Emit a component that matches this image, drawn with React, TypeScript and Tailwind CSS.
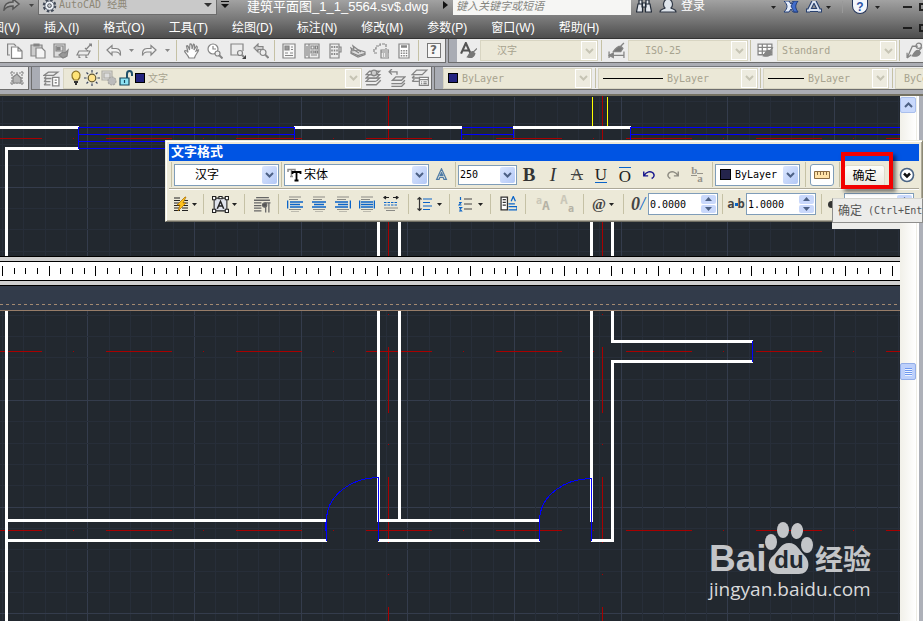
import React from "react"

type BoxProps = { children?: React.ReactNode; className?: string }

const CJK = "font-['Liberation_Sans','Noto_Sans_CJK_SC',sans-serif]"
const MONO = "font-['DejaVu_Sans_Mono','Noto_Sans_CJK_SC',monospace]"

function Icon({ children, className = "size-4" }: BoxProps) {
  return (
    <svg viewBox="0 0 16 16" fill="none" stroke="currentColor" strokeWidth="1.2" className={`shrink-0 ${className}`} aria-hidden="true">
      {children}
    </svg>
  )
}

function Sep({ className = "w-[5px]" }: { className?: string }) {
  return (
    <span className={`flex shrink-0 justify-center self-stretch py-px ${className}`}>
      <span className="w-px bg-[#c5c1a5]" />
    </span>
  )
}

/* short divider between the paragraph tools */
function RowSep({ className = "w-[11px]" }: { className?: string }) {
  return (
    <span className={`flex h-5 shrink-0 justify-center ${className}`}>
      <span className="w-px bg-[#c5c1a5]" />
    </span>
  )
}

function Tool({ label, children, className = "w-[23px]" }: BoxProps & { label: string }) {
  return (
    <button type="button" aria-label={label} className={`flex shrink-0 items-center justify-center ${className}`}>
      {children}
    </button>
  )
}

function Caret({ className = "text-[#222]" }: { className?: string }) {
  return (
    <svg viewBox="0 0 5 3" className={`h-[3px] w-[5px] shrink-0 ${className}`} aria-hidden="true">
      <path d="M0 0h5L2.5 3z" fill="currentColor" />
    </svg>
  )
}

function Chevron({ className = "" }: { className?: string }) {
  return (
    <svg viewBox="0 0 9 6" className={`h-[6px] w-[9px] ${className}`} fill="none" stroke="currentColor" strokeWidth="2" aria-hidden="true">
      <path d="M1 1l3.500 3.500L8 1" />
    </svg>
  )
}

/* greyed-out drop-down of the docked toolbars */
function DockSelect({ label, value, children, className = "" }: BoxProps & { label: string; value: string }) {
  return (
    <div className={`flex h-[21px] shrink-0 items-center border border-[#d8d5c2] bg-[#ebe8d7] pl-1 text-[#a7a38f] ${className}`}>
      {children}
      <select disabled aria-label={label} className={`h-full min-w-0 flex-1 appearance-none bg-transparent text-[10px] opacity-100 ${MONO}`}>
        <option>{value}</option>
      </select>
      <span className="flex h-full w-4 items-center justify-center border border-white bg-[#edebdf] text-[#c6c4b4]">
        <Chevron />
      </span>
    </div>
  )
}

function PanelSelect({ label, value, children, className = "" }: BoxProps & { label: string; value: string }) {
  return (
    <div className={`flex shrink-0 items-center border border-[#7f9db9] bg-white p-px text-black ${className}`}>
      {children}
      <select aria-label={label} className="h-full min-w-0 flex-1 appearance-none bg-transparent">
        <option>{value}</option>
      </select>
      <span className="flex h-full w-[15px] items-center justify-center rounded-[2px] bg-gradient-to-br from-[#dbe6fe] to-[#b3c8f6] text-[#4d6185]">
        <Chevron />
      </span>
    </div>
  )
}

function Spinner({ label, value }: { label: string; value: string }) {
  return (
    <div className="flex h-[22px] w-[70px] shrink-0 border border-[#7f9db9] bg-white p-px">
      <input aria-label={label} defaultValue={value} className="h-[18px] w-0 min-w-0 flex-1 bg-white text-black outline-none" />
      <span className="flex w-[15px] flex-col gap-px text-[#4d6185]">
        <button type="button" aria-label={`${label} +`} className="flex flex-1 items-center justify-center rounded-[2px] bg-[#c9d8fb]">
          <svg viewBox="0 0 7 4" className="h-1 w-[7px]"><path d="M0 4h7L3.500 0z" fill="currentColor" /></svg>
        </button>
        <button type="button" aria-label={`${label} -`} className="flex flex-1 items-center justify-center rounded-[2px] bg-[#c9d8fb]">
          <svg viewBox="0 0 7 4" className="h-1 w-[7px]"><path d="M0 0h7L3.500 4z" fill="currentColor" /></svg>
        </button>
      </span>
    </div>
  )
}

function Grip() {
  return <span className="w-2 shrink-0 self-stretch bg-[#a9acb4]" />
}

const undoPath = "M1 7l5-4.500v3h4c3.500 0 5 2.500 4.500 7-1-2.500-2.500-3.500-4.500-3.500H6v3z"

function Undo({ flip = false, className = "size-4" }: { flip?: boolean; className?: string }) {
  return (
    <Icon className={className}>
      <path d={undoPath} transform={flip ? "matrix(-1 0 0 1 16 0)" : undefined} fill="#f2f2f2" />
    </Icon>
  )
}

function Layers() {
  return (
    <>
      <path d="M1 11l3-3h9l-3 3z" fill="#eee" />
      <path d="M1 8l3-3h9l-3 3z" fill="#eee" />
      <path d="M1 5l3-3h9l-3 3zM1 14h9l4-4" fill="#eee" />
    </>
  )
}

function TitleBar() {
  return (
    <div className="flex h-[16px] shrink-0 items-start overflow-hidden text-[#333]">
      <Tool label="重做" className="w-[24px] text-[#aaa]">
        <svg viewBox="0 0 18 11" className="h-[11px] w-[18px]" fill="none" stroke="#565656" strokeWidth="1.500"><path d="M1 10c0-6 3-8 9-8V-1l6 5-6 5V6C5 6 3 7 1 10z" fill="#aaa" /></svg>
      </Tool>
      <Tool label="更多" className="h-[10px] w-[14px]"><Caret className="text-[#444]" /></Tool>
      <div className="flex h-[15px] w-[179px] shrink-0 items-start border border-t-0 border-[#6c6c6c] bg-[#c9c9c9] pl-[3px]">
        <svg viewBox="0 0 16 16" className="size-[15px]" fill="#eef2f7" stroke="#434b58" aria-hidden="true">
          <circle cx="8" cy="6" r="6" strokeWidth="2.500" strokeDasharray="2.700 2" />
          <circle cx="8" cy="6" r="5" />
          <circle cx="8" cy="6" r="2" fill="#c9c9c9" />
        </svg>
        <select aria-label="工作空间" className={`h-[10px] min-w-0 flex-1 appearance-none bg-transparent pl-[2px] text-[10px] leading-[10px] text-[#8d8776] ${MONO}`}>
          <option>AutoCAD 经典</option>
        </select>
        <span className="flex h-[10px] w-3 items-center"><svg viewBox="0 0 8 4" className="h-1 w-2"><path d="M0 0h8L4 4z" fill="#333" /></svg></span>
      </div>
      <Tool label="自定义" className="w-[15px]">
        <svg viewBox="0 0 8 7" className="mt-[1px] h-[7px] w-2"><path d="M0 0h8v1H0zM0 3h8L4 7z" fill="#111" /></svg>
      </Tool>
      <span className="ml-[15px] w-[196px] shrink-0 text-[13px] leading-[14px] whitespace-nowrap text-white">建筑平面图_1_1_5564.sv$.dwg</span>
      <svg viewBox="0 0 5 8" className="mt-[1px] mr-[5px] h-2 w-[5px] shrink-0"><path d="M0 0l5 4-5 4z" fill="#111" /></svg>
      <input aria-label="搜索" placeholder="键入关键字或短语" className="h-[15px] w-[178px] shrink-0 bg-[#f6f6f4] pb-1 pl-[3px] text-[11px] leading-[11px] italic placeholder:text-[#85857f]" />
      <Tool label="查找" className="w-[26px]">
        <svg viewBox="0 0 16 13" className="h-[13px] w-4" fill="#e4e8ee" stroke="#222b38" strokeWidth="1.200"><path d="M3 0h3v4H3zM10 0h3v4h-3zM6 3h4v4H6zM2 4h4.500v8h-6zM9.500 4H14l1.500 8h-6z" /></svg>
      </Tool>
      <a href="#login" className="flex shrink-0 gap-1 text-[12px] leading-[12px] whitespace-nowrap text-white">
        <svg viewBox="0 0 18 13" className="ml-[2px] h-[13px] w-[18px]" fill="#dfe5ec" stroke="#333b48" strokeWidth="1.200"><path d="M1 12c0-3 4-3 5-4C3 5 5-1 9-1s6 6 3 9c1 1 5 1 5 4z" /></svg>
        登录
      </a>
      <div className="ml-auto flex shrink-0 items-center gap-[7px] pr-0">
        <Caret />
        <svg viewBox="0 0 16 12" className="h-3 w-4" stroke="#233e78" fill="#e5edfa"><path d="M1 0c4 4 4 7 0 11h5l2-3 2 3h5c-4-4-4-7 0-11h-5L8 3 6 0z" /><path d="M8 5l3-5h4c-3 4-3 7 0 11h-4z" fill="#426dcc" /></svg>
        <svg viewBox="0 0 16 12" className="h-3 w-4" fill="none" stroke="#29416e" strokeWidth="4"><path d="M8-1L3 9h10zM0 9.500h4M12 9.500h4" /><path d="M8-1L3 9h10zM1 9.500h3M12 9.500h3" stroke="#dbe4f2" strokeWidth="1.800" /></svg>
        <Caret className="-ml-[3px] text-[#222]" />
        <span className="ml-1 h-3 w-px bg-[#999]" />
        <button type="button" aria-label="帮助" className="ml-[2px] flex h-[14px] w-4 items-center justify-center rounded-b-full border border-t-0 border-[#24355b] bg-[#f3f6fb] text-[12px] leading-[14px] font-bold text-[#2a52a5]">?</button>
        <Caret className="text-[#222]" />
        <span className="ml-[16px] h-[2px] w-[9px] bg-[#222]" />
        <span className="h-2 w-1 border-2 border-r-0 border-[#222]" />
      </div>
    </div>
  )
}

const menus = ["视图(V)", "插入(I)", "格式(O)", "工具(T)", "绘图(D)", "标注(N)", "修改(M)", "参数(P)", "窗口(W)", "帮助(H)"]

function MenuBar() {
  return (
    <nav className="flex h-[23px] shrink-0 items-center gap-6 overflow-hidden border-b border-[#333] pt-[2px] text-[12px] text-white">
      {menus.map((m, i) => (
        <button key={m} type="button" className={`shrink-0 whitespace-nowrap ${i === 0 ? "-ml-5" : ""}`}>{m}</button>
      ))}
      <span className="ml-auto flex shrink-0 items-center gap-[7px]">
        <span className="h-[2px] w-[9px] bg-[#1c1c1c]" />
        <span className="h-2 w-1 border-2 border-r-0 border-[#1c1c1c]" />
      </span>
    </nav>
  )
}

function BrushTip() {
  return <path d="M15 5l-4 4.500M12 8c-3-1-4 2-6 5 3 1 7 0 7.500-3z" fill="#858585" />
}

function StandardToolbar() {
  return (
    <div className="flex h-[24px] shrink-0 items-center gap-[2px] overflow-hidden text-[#858585]">
      <div className="flex h-full shrink-0 items-center border-r border-b border-[#6e6e6e] bg-[#ececec] pl-[3px]">
        <Tool label="新建"><Icon><path d="M3 12H.600V1H7l2 2" /><path d="M4.500 4H11l4 4v7.400H4.500zM11 4v4h4" fill="#fff" /></Icon></Tool>
        <Tool label="打开"><Icon><path d="M1 2h11v11H1zM4 1h5v2H4z" fill="#ccc" /><path d="M6 5h6l3 3v7H6z" fill="#f4f4f4" /></Icon></Tool>
        <Tool label="保存"><Icon><path d="M1 1h11v13H1zM3 3h7v5H3z" fill="#ddd" /><path d="M4 4.500h3V7H4z" fill="#858585" /><path d="M6 12l4-3 2 1 3-3-1 6-4 2z" fill="#999" /></Icon></Tool>
        <Tool label="打印"><Icon><path d="M3 8h11l-2 4H1zM3 12v2.500h1.500M10 12v2.500h1.500" /><path d="M10 6.500L15 1M13 1h2.500v2.500M9 5l3 3" /></Icon></Tool>
        <Sep className="w-[7px]" />
        <Tool label="放弃" className="w-[24px]"><Undo /></Tool>
        <Tool label="放弃列表" className="w-[10px]"><Caret className="text-[#888]" /></Tool>
        <Tool label="重做" className="w-[26px]"><Undo flip /></Tool>
        <Tool label="重做列表" className="w-[10px]"><Caret className="text-[#888]" /></Tool>
        <Sep className="w-[8px]" />
        <Tool label="平移"><Icon><path d="M5 15c-1-3-4-5-4.500-7C2 7 3 8 4 9.500L2.500 3C4 2 4.500 4 5.500 7L6 1c1.500-.500 2 1 2 5l1.500-5c1.500 0 1 2 .500 6l2.500-4c1.500.500.500 3-.500 5l2.500-1c0 2-3 4-4 8z" fill="#fff" /></Icon></Tool>
        <Tool label="实时缩放"><Icon><circle cx="6" cy="6" r="5" fill="#fff" /><path d="M6 3v3h3" /><circle cx="10.500" cy="10.500" r="2.500" fill="#eee" /><path d="M12 12l3.500 3.500" strokeWidth="2" /></Icon></Tool>
        <Tool label="窗口缩放"><Icon><path d="M9 12H1V1h12v7" /><circle cx="10" cy="10" r="2.500" /><path d="M12 12l2 2" strokeWidth="2" /><path d="M16 12v4h-4z" fill="#444" stroke="none" /></Icon></Tool>
        <Tool label="缩放上一个"><Icon><path d="M1 5l4-4v2.500h5v3H5V9z" fill="#ccc" /><circle cx="10" cy="9.500" r="3" fill="#eee" /><path d="M12.500 12l3 3" strokeWidth="2" /></Icon></Tool>
        <Sep />
        <Tool label="特性"><Icon><path d="M2 1h12v14H2z" fill="#f8f8f8" /><path d="M4 3h4v4H4z" fill="#999" /><path d="M10 4h2M10 6.500h2M4 10h3M9 10h3M4 12.500h8" /></Icon></Tool>
        <Tool label="设计中心"><Icon><path d="M1 1h14v14H1zM5 1v14M3 3v10" /><path d="M7 3h3v3H7zM11.500 3h2v3h-2zM7 8h3v2H7zM11.500 8h2v2h-2zM7 12h6" /></Icon></Tool>
        <Tool label="工具选项板"><Icon><path d="M3 1h9v14H3zM12 4h2v5h-2" /><path d="M5 3v9M7.500 3v9M10 3v9" strokeDasharray="2 1.500" strokeWidth="1.500" /></Icon></Tool>
        <Tool label="图纸集"><Icon><path d="M1 8l8-1 6 2v2.500l-7 2.500-7-3.500z" fill="#ddd" /><path d="M2 8l-1-3 8 5M4 6l-1-3 8 6M1 9.500l7 3 7-2" /></Icon></Tool>
        <Tool label="标记集"><Icon><path d="M4 10H1V6h2V3h4V1h6v5" strokeDasharray="3 1" /><path d="M8 7h8v8H8zM8 9h8M10 11h1M12 11h3M10 13h1M12 13h3" /></Icon></Tool>
        <Tool label="计算器"><Icon><path d="M3 1h10v14H3z" fill="#fff" /><path d="M5 3.500h6" strokeWidth="2.500" /><path d="M5.500 7v7M8 7v7M10.500 7v7" strokeWidth="1.500" strokeDasharray="1.500 1" /></Icon></Tool>
        <Sep className="w-[7px]" />
        <Tool label="帮助"><span className="flex h-[15px] w-[14px] items-center justify-center border border-[#777] bg-[#f8f8f8] font-['DejaVu_Sans',sans-serif] text-[12px] leading-[13px] font-bold text-[#666]">?</span></Tool>
      </div>
      <div className="flex h-full min-w-0 flex-1 items-center overflow-hidden border-b border-l border-[#6e6e6e] bg-[#ececec]">
        <Grip />
        <Tool label="文字样式"><Icon className="size-[17px] text-[#555]"><path d="M1 11L5.500 1 10 11M3 8h5" strokeWidth="2" /><path d="M16 6l-4 4M12 9c-3 0-3 3-5 5 3 1 6 1 7-3z" fill="#777" stroke="#777" /></Icon></Tool>
        <DockSelect label="文字样式" value="汉字" className="w-[118px]"><span className="w-3" /></DockSelect>
        <Sep className="w-[7px]" />
        <Tool label="标注样式"><Icon className="size-[17px]"><path d="M1 9v6M15 9v6M2 12.500h13M1 12.500l4-2v4z" fill="#666" /><path d="M15 1l-4 4M12 4c-3 0-5 2-7 5h7l2-3z" fill="#777" /></Icon></Tool>
        <DockSelect label="标注样式" value="ISO-25" className="w-[120px]"><span className="w-3" /></DockSelect>
        <Sep />
        <Tool label="表格样式" className="w-[24px]"><Icon className="size-[17px]"><path d="M1 2h13v10H1zM1 5h13M1 8.500h13M5 2v10M9.500 2v10" fill="#fff" /><BrushTip /></Icon></Tool>
        <DockSelect label="表格样式" value="Standard" className="w-[120px]" />
        <Sep />
        <Tool label="多重引线样式" className="w-[24px]"><Icon className="size-[17px]"><path d="M1 15L6 4h5M1 15v-5M1 15l4-3" /><circle cx="12" cy="3.500" r="2.500" /><BrushTip /></Icon></Tool>
      </div>
    </div>
  )
}

function LayerToolbar() {
  return (
    <div className="mt-[3px] flex h-[24px] shrink-0 items-center gap-[2px] overflow-hidden border-t border-[#74767b] text-[#858585]">
      <div className="flex h-full shrink-0 items-center border-r border-b border-[#6e6e6e] bg-[#ececec] pl-[5px]">
        <Tool label="块编辑"><Icon><path d="M1 3h14M1 13h14M3 1v14M13 1v14" strokeDasharray="2 1" /><path d="M4 13V7l4-3 4 4v5z" fill="#b6b6b6" /></Icon></Tool>
      </div>
      <div className="flex h-full shrink-0 items-center border-r border-b border-l border-[#6e6e6e] bg-[#ececec]">
        <Grip />
        <Tool label="图层特性"><Icon className="size-[17px]"><path d="M1 5l4-3h9l-4 3zM1 8h7M1 11h6M1 14h6M1 8l2-2M1 11l2-2M1 14l2-2" /><path d="M9 7h6v8H9z" fill="#fff" /><path d="M11 9.500h2M11 12h2" /></Icon></Tool>
        <DockSelect label="图层" value="文字" className="w-[299px]">
          <Icon><path d="M6 10C3 7 3 2 8 1c5 1 5 6 2 9z" fill="#ffe477" stroke="#8d7428" /><path d="M6 12h4M7 14h2" stroke="#333" strokeWidth="2" /></Icon>
          <Icon><path d="M8 0v16M0 8h16M2.500 2.500l11 11M13.500 2.500l-11 11" stroke="#3b4660" /><circle cx="8" cy="8" r="5.500" fill="#ebe8d7" stroke="none" /><circle cx="8" cy="8" r="3.800" fill="#ffe38c" stroke="#5e542f" /></Icon>
          <Icon className="ml-px size-4"><path d="M1 1h10v9H1zM3 3h6v5H3z" fill="#ddd" stroke="#b0aea5" /><circle cx="11" cy="11" r="4" fill="#bbb" stroke="#a5a5a0" strokeDasharray="2 1" /></Icon>
          <Icon className="ml-px size-4"><path d="M9 8V4c0-4 5-4 5 0v2" stroke="#20506b" strokeWidth="2" /><path d="M2 8h9v7H2z" fill="#8de3f4" stroke="#17475d" /><path d="M6.500 10v3" stroke="#17475d" /></Icon>
          <span className="mr-[3px] ml-px size-[10px] border border-black bg-[#24247f]" />
        </DockSelect>
        <Tool label="置为当前"><Icon className="size-[18px]"><Layers /><circle cx="8" cy="3.500" r="2.500" fill="#ccc" /></Icon></Tool>
        <Tool label="上一个图层"><Icon className="size-[18px]"><path d="M4 10l3-3h8l-3 3zM3 13h9l3-3M3 15.500h9l3-3" /><path d="M8 5V2.500H1M3.500 0L1 2.500 3.500 5" /></Icon></Tool>
        <Tool label="图层状态"><Icon className="size-[18px]"><path d="M1 5l4-4h9l-4 4zM1 8h6M1 11h6M1 8l2-2M1 11l2-2" /><path d="M7.500 7.500h8v7h-8zM7.500 9.500h8M9 11.500h1M11 11.500h3M9 13h1M11 13h3" fill="#fff" /></Icon></Tool>
      </div>
      <div className="flex h-full min-w-0 flex-1 items-center overflow-hidden border-b border-l border-[#6e6e6e] bg-[#ececec]">
        <Grip />
        <DockSelect label="颜色" value="ByLayer" className="w-[149px]"><span className="mr-1 size-[10px] border border-black bg-[#24247f]" /></DockSelect>
        <Sep className="w-[6px]" />
        <DockSelect label="线型" value="ByLayer" className="w-[160px]"><span className="mr-1 h-px w-[60px] bg-black" /></DockSelect>
        <Sep />
        <DockSelect label="线宽" value="ByLayer" className="w-[126px]"><span className="mr-1 h-px w-[36px] bg-black" /></DockSelect>
        <Sep className="w-[6px]" />
        <DockSelect label="打印样式" value="ByColor" className="w-[120px]"><span className="w-1" /></DockSelect>
      </div>
    </div>
  )
}

const steps = Array.from({ length: 90 }, (_, i) => i)
const axis = { stroke: "#a80000", strokeDasharray: "66 31 1 32" }

/* floor plan, in window coordinates shifted up by the toolbars' height */
function FloorPlan() {
  return (
    <svg className="absolute inset-0 h-full w-full" shapeRendering="crispEdges" fill="none" aria-hidden="true">
      <g transform="translate(0 -96)">
        {steps.map((i) => {
          const x = Math.round(87.3 + (i - 5) * 21.33) + 0.5
          const y = Math.round(80 + i * 21.33) + 0.5
          return (
            <g key={i}>
              <path d={`M${x} 97V3000`} stroke={i % 5 === 0 ? "#343c4c" : "#272e39"} />
              <path d={`M0 ${y}H3000`} stroke={i % 5 === 0 ? "#343c4c" : "#272e39"} />
            </g>
          )
        })}
        <path
          d="M294.500 127.500H78.500V148.500H294.500zM78 134.500H295M78 141.500H295M461.500 148V127.500H513.500V148M461 134.500H514M3000 127.500H630.500V148M630 134.500H3000M752.500 341V362"
          stroke="#00f"
        />
        <path d="M-24 138.500H3000M-24 351.500H3000M-24 530.500H3000M388.500 87V3000M602.500 87V3000" {...axis} />
        <path d="M592.500 97V127M607.500 97V127" stroke="#ff0" />
        <path
          d="M0 127.500H79M294 127.500H462M513 127.500H631M79 148.500H6.500V3000M378.500 200V522M399.500 200V519M591.500 200V522M612.500 200V341.500H753M753 361.500H612.500V540.500H591M8 520.500H327M8 540.500H327M377 520.500H540M378 540.500H540"
          stroke="#fff"
          strokeWidth="3"
        />
        <path d="M78.500 127V149M294.500 127V149M630.500 127V149M752.500 341V362" stroke="#00f" />
        <path d="M326.500 541V520A52 43 0 0 1 378.500 477.500V541M539.500 541V520A52 42 0 0 1 591.500 478.500V541" stroke="#00f" />
        <path d="M325.500 522V531" stroke="#00f" />
      </g>
    </svg>
  )
}

function TextRuler() {
  return (
    <div className="absolute inset-x-0 top-[160px] overflow-hidden border-b border-[#977d69] bg-[#323b4a]">
      <div className="h-[6px] border-y border-black bg-[#cfcfcf]" />
      <svg className="block h-[18px] w-full bg-white" shapeRendering="crispEdges" aria-hidden="true">
        {Array.from({ length: 250 }, (_, i) => {
          const x = Math.round(1.8 + i * 11.71) + 0.5
          return <path key={i} d={i % 4 === 0 ? `M${x} 4v10` : `M${x} 6v6`} stroke="#000" />
        })}
      </svg>
      <div className="h-[6px] border-y border-black bg-[#cfcfcf]" />
      <svg className="block h-[24px] w-full" shapeRendering="crispEdges" aria-hidden="true">
        <path d="M0 18.500H3000" stroke="#a48a72" strokeDasharray="3 3" />
      </svg>
    </div>
  )
}

function Watermark() {
  return (
    <div className="absolute right-[27px] bottom-[19px] w-[164px] text-[#c3c5c8]">
      <div className="flex h-[53px] items-end">
        <span className="w-[56px] font-['Liberation_Sans',sans-serif] text-[37px] leading-[33px] font-bold">Bai</span>
        <div className="relative h-[53px] w-[50px] shrink-0">
          <svg viewBox="0 0 50 53" className="h-[53px] w-[50px]" fill="currentColor" aria-hidden="true">
            <ellipse cx="6" cy="20" rx="6" ry="8" />
            <ellipse cx="18" cy="8" rx="6" ry="8" />
            <ellipse cx="32" cy="9" rx="6" ry="8" transform="rotate(8 32 9)" />
            <ellipse cx="42" cy="23" rx="6" ry="8" />
            <path d="M24 21c8 0 10 7 15 12 7 6 6 19-5 19H13C2 52 1 39 9 33c5-5 7-12 15-12z" />
          </svg>
          <span className="absolute inset-x-0 bottom-1 pr-[2px] text-center font-['Liberation_Sans',sans-serif] text-[24px] leading-[22px] font-bold text-[#22282f]">du</span>
        </div>
        <span className="font-['Noto_Sans_CJK_SC',sans-serif] text-[28px] leading-[33px] font-bold whitespace-nowrap">经验</span>
      </div>
      <div className="mt-px h-[26px] font-['Open_Sans',sans-serif] text-[19px] leading-[27px] font-medium whitespace-nowrap text-[#d9dadb]">jingyan.baidu.com</div>
    </div>
  )
}

function ScrollBar() {
  return (
    <div className="flex w-[23px] shrink-0 border-r-4 border-[#adb0b8] bg-white">
      <div className="flex w-[17px] flex-col border-r border-[#eeede5] bg-gradient-to-r from-[#f1f0e9] to-white pt-px">
        <button type="button" aria-label="向上滚动" className="flex h-4 w-4 items-center justify-center rounded-[2px] border border-[#a9bfed] bg-[#c9d9fc] text-[#4d6185]">
          <Chevron className="rotate-180" />
        </button>
        <div className="mt-[250px] flex h-[17px] w-4 flex-col items-center justify-center gap-px rounded-[2px] border border-[#93aee8] bg-[#bdd0fb]">
          <span className="h-px w-[7px] bg-[#6e98f0] shadow-[0_1px_#eef4fe]" />
          <span className="h-px w-[7px] bg-[#6e98f0] shadow-[0_1px_#eef4fe]" />
          <span className="h-px w-[7px] bg-[#6e98f0] shadow-[0_1px_#eef4fe]" />
          <span className="h-px w-[7px] bg-[#6e98f0] shadow-[0_1px_#eef4fe]" />
        </div>
      </div>
    </div>
  )
}

function FormatRow() {
  const glyph = "font-['Liberation_Serif',serif] text-[19px] leading-5 text-[#333]"
  return (
    <div className="flex h-[27px] items-center">
      <Sep />
      <PanelSelect label="样式" value="汉字" className={`h-[22px] w-[105px] pl-5 text-[12px] ${MONO}`} />
      <Sep />
      <PanelSelect label="字体" value="宋体" className={`h-[22px] w-[145px] pl-[2px] text-[12px] ${MONO}`}>
        <svg viewBox="0 0 15 14" className="mr-[2px] h-[14px] w-[15px] shrink-0" fill="none" aria-hidden="true">
          <path d="M1 4V1.500h7V4M4.500 1v7M3 8.500h3" stroke="#8a8a8a" strokeWidth="1.500" />
          <path d="M5.500 6V4h8v2M9.500 4v8M7.500 12.500h4" stroke="#000" strokeWidth="1.800" />
        </svg>
      </PanelSelect>
      <Tool label="注释性" className="w-[24px] text-[#4f7ba6]"><Icon className="size-[13px]"><path d="M8 1L2 14h3l1-2.500h4l1 2.500h3zM8 6l1.500 3h-3z" strokeWidth="1.500" /></Icon></Tool>
      <Sep />
      <PanelSelect label="文字高度" value="250" className={`h-5 w-[59px] text-[10px] ${MONO}`} />
      <Tool label="粗体" className="w-6"><span className={`${glyph} font-bold`}>B</span></Tool>
      <Tool label="斜体" className="w-6"><span className={`${glyph} italic`}>I</span></Tool>
      <Tool label="删除线" className="w-6"><span className="font-['Liberation_Serif',serif] text-[17px] leading-5 text-[#444] line-through">A</span></Tool>
      <Tool label="下划线" className="w-6"><span className="h-4 border-b border-[#0a64c8] font-['Liberation_Serif',serif] text-[17px] leading-[15px] text-[#222]">U</span></Tool>
      <Tool label="上划线" className="w-6"><span className="h-4 border-t border-[#0a64c8] font-['Liberation_Serif',serif] text-[17px] leading-[17px] text-[#222]">O</span></Tool>
      <Tool label="放弃" className="w-6 text-[#14148c]"><Icon className="size-[14px]"><path d="M2 4v5h5M2 9c3-5 8-6 11-3 2 3 0 5-2 6" strokeWidth="1.600" /></Icon></Tool>
      <Tool label="重做" className="w-6 text-[#8c8a80]"><Icon className="size-[14px]"><path d="M14 4v5H9M14 9c-3-5-8-6-11-3-2 3 0 5 2 6" strokeWidth="1.600" /></Icon></Tool>
      <Tool label="堆叠" className="w-6">
        <span className="flex h-4 items-center font-['Liberation_Serif',serif] text-[11px] font-bold text-[#96938a]">
          <span className="mb-[7px] border-b border-[#96938a] leading-[9px]">b</span><span className="mt-[7px] border-t border-[#96938a] leading-[9px]">a</span>
        </span>
      </Tool>
      <Sep className="w-[6px]" />
      <PanelSelect label="颜色" value="ByLayer" className={`h-[22px] w-[85px] pl-1 text-[10px] ${MONO}`}>
        <span className="mr-1 size-[11px] border border-black bg-[#24244c]" />
      </PanelSelect>
      <Sep className="w-[10px]" />
      <button type="button" aria-label="标尺" className="flex h-[22px] w-6 shrink-0 items-center justify-center rounded-[3px] border border-[#7f9db9] bg-white">
        <svg viewBox="0 0 16 8" className="h-2 w-4" fill="#ffe3a8" stroke="#8a6c42"><path d="M.5.5h15v7H.5zM3.500 1v3M6.500 1v3M9.500 1v3M12.500 1v3" /></svg>
      </button>
      <Sep className="w-[10px]" />
      <div className="relative shrink-0">
        <button type="button" className={`h-[22px] w-[41px] rounded-[3px] border border-[#dedbcd] bg-gradient-to-b from-[#fdfdfb] to-[#ebe9e0] text-[12px] whitespace-nowrap text-black ${CJK}`}>确定</button>
        <span className="pointer-events-none absolute -top-[11px] -right-2 -bottom-[2px] -left-[3px] border-4 border-[#f20000] shadow-[3px_3px_4px_rgba(0,0,0,0.5)]" />
      </div>
      <Sep className="w-[9px]" />
      <Tool label="选项" className="w-[26px]"><Icon><circle cx="8" cy="8" r="6.500" fill="#fff" stroke="#4a6484" strokeWidth="1.600" /><path d="M5 6.500l3 3 3-3" stroke="#111" strokeWidth="2.500" /></Icon></Tool>
    </div>
  )
}

const alignIcons = [
  { label: "左对齐", d: "M3 6h13M3 8.500h10M3 11h13M.600 4.500v8" },
  { label: "居中", d: "M1 6h14M3 8.500h10M1 11h14" },
  { label: "右对齐", d: "M0 6h13M3 8.500h10M0 11h13M15.400 4.500v8" },
  { label: "对正", d: "M2 6h12M2 8.500h12M2 11h12M.600 4.500v8M15.400 4.500v8" },
]

function ParagraphRow() {
  const mark = "font-['Liberation_Serif',serif] font-bold text-[#444]"
  return (
    <div className={`flex h-[28px] items-center pl-[2px] text-[10px] ${MONO}`}>
      <Tool label="栏数" className="w-[27px] gap-[3px]"><Icon className="size-4 text-[#222]"><path d="M1 2h6M1 4.500h6M1 7h6M1 9.500h6M1 12h6M1 14.500h6M9 7h6M9 9.500h6M9 12h6M9 14.500h6M9 4.500h6" /><path d="M12 1L4 9h3l-2 6 8-8h-3l3-6z" fill="#ffc21c" stroke="#a56a00" strokeWidth=".7" /></Icon><Caret /></Tool>
      <RowSep />
      <Tool label="多行文字对正" className="w-[30px] gap-[3px]"><Icon className="size-[17px] text-[#222]"><path d="M2 2h12v12H2z" fill="#dfe3ec" strokeWidth="1" /><path d="M5 12l3-7 3 7M6 9.500h4" strokeWidth="1.400" /><path d="M.500.500h3v3h-3zM12.500.500h3v3h-3zM.500 12.500h3v3h-3zM12.500 12.500h3v3h-3zM6.500.500h3v2h-3z" fill="#fff" strokeWidth="1" /></Icon><Caret /></Tool>
      <RowSep />
      <Tool label="段落" className="w-6"><Icon className="size-[17px] text-[#666]"><path d="M2 1.500h12M0 4h15M0 6.500h7M0 9h7M0 11.500h7M0 14h7M11 6.500v9M14 6.500v9M15.500 6.500H10" /><circle cx="10" cy="8.500" r="2" fill="#555" /></Icon></Tool>
      <RowSep className="w-[9px]" />
      {alignIcons.map((a) => (
        <Tool key={a.label} label={a.label} className="w-6">
          <Icon><path d="M2 1h12M2 3.500h9M2 13.500h12M4 16h8" stroke="#8b8b86" /><path d={a.d} stroke="#0a64c8" strokeWidth="1.400" /></Icon>
        </Tool>
      ))}
      <Tool label="分布" className="w-6"><Icon><path d="M1 1.500h5M10 1.500h5M3 0L1 1.500 3 3M13 0l2 1.500L13 3" stroke="#222" /><path d="M1 6.500h14M1 9h14" stroke="#0a64c8" strokeDasharray="2.500 1" /><path d="M1 12h14M3 14.500h9" stroke="#8b8b86" /></Icon></Tool>
      <RowSep />
      <Tool label="行距" className="w-[30px] gap-[4px]"><Icon><path d="M2.500 2v12M.500 3.500l2-2 2 2M.500 12.500l2 2 2-2" stroke="#333" /><path d="M6 3h9M6 6.500h7M6 10h9M6 13.500h7" stroke="#0a64c8" /></Icon><Caret /></Tool>
      <RowSep />
      <Tool label="编号" className="w-[30px] gap-[4px]"><Icon><path d="M2.500 1v3M1 6.500h2L1 9h2.500M1 11.500h2.500L2 13l1.500 2H1" stroke="#0a64c8" /><path d="M6 3h8M6 8h8M6 13h8" stroke="#444" /></Icon><Caret /></Tool>
      <RowSep />
      <Tool label="插入字段" className="w-6"><Icon className="size-[17px]"><path d="M1 1h6v12H1zM2.500 3.500h3M2.500 6h3M2.500 8.500h3" stroke="#333" fill="#fff" /><path d="M10.500 5l2-4.500 2 4.500" stroke="#0a64c8" /><path d="M8 7.500h6M8 10h8M8 13h8v-3" stroke="#0a64c8" /></Icon></Tool>
      <RowSep />
      <Tool label="大写" className="w-6 text-[#b5b2a5]"><span className="pb-2 text-[10px] font-bold opacity-60">a</span><span className="pt-1 text-[13px] font-bold">A</span></Tool>
      <Tool label="小写" className="w-6 text-[#b5b2a5]"><span className="pb-2 text-[13px] font-bold opacity-60">A</span><span className="pt-2 text-[10px] font-bold">a</span></Tool>
      <RowSep className="w-[9px]" />
      <Tool label="符号" className="w-[30px] gap-[3px]"><span className={`${mark} text-[15px] leading-4`}>@</span><Caret /></Tool>
      <RowSep />
      <span className={`${mark} w-[19px] shrink-0 pl-[2px] text-[18px] leading-5 italic`} aria-hidden="true">0<span className="font-normal text-[#0a64c8]">/</span></span>
      <Spinner label="倾斜角度" value="0.0000" />
      <RowSep className="w-[8px]" />
      <span className="flex w-[20px] shrink-0 items-center justify-center text-[12px] font-bold text-[#444]" aria-hidden="true">
        a<span className="size-[3px] shrink-0 bg-[#0a64c8]" />b
      </span>
      <Spinner label="追踪" value="1.0000" />
      <RowSep className="w-[10px]" />
      <span className="flex w-[18px] shrink-0 pl-[2px]"><span className="size-[7px] rounded-full bg-[#333]" /></span>
      <Spinner label="宽度因子" value="" />
    </div>
  )
}

function TextFormatPanel() {
  return (
    <section aria-label="文字格式" className="absolute top-[140px] right-0 left-[165px] border border-t-[#ece9d8] border-r-[#8c8975] border-b-[#716f64] border-l-[#ece9d8] bg-[#ece9d8] shadow-[inset_1px_1px_#fff,inset_-1px_-1px_#aca899]">
      <div className="p-[3px]">
        <h2 className={`h-[17px] bg-[#0054e3] pl-[2px] text-[13px] leading-[16px] font-bold text-white ${CJK}`}>文字格式</h2>
        <FormatRow />
        <div className="h-[2px] border-t border-b border-t-[#aca899] border-b-white" />
        <ParagraphRow />
      </div>
    </section>
  )
}

export default function App() {
  return (
    <div className={`relative flex h-screen flex-col overflow-hidden bg-[#abadb4] ${CJK}`}>
      <header className="flex shrink-0 flex-col bg-gradient-to-b from-[#a2a2a2] via-[#777] to-[#4b4b4b]">
        <TitleBar />
        <MenuBar />
      </header>
      <StandardToolbar />
      <LayerToolbar />
      <main className="mt-1 flex min-h-0 flex-1 border-t-2 border-[#757263]">
        <div className="relative min-w-0 flex-1 overflow-hidden bg-[#22282f]">
          <FloorPlan />
          <TextRuler />
          <Watermark />
        </div>
        <ScrollBar />
      </main>
      <TextFormatPanel />
      <div role="tooltip" className={`absolute top-[198px] right-0 w-[91px] overflow-hidden text-[10px] whitespace-nowrap text-[#555] ${MONO}`}>
        <div className="flex h-[25px] items-center gap-[6px] border border-[#8e8e8c] border-t-[#d5d5d0] bg-[#ececea] pl-[5px]">
          <span className="text-[12px]">确定</span>
          <span>(Ctrl+Ent</span>
        </div>
        <div className="h-[6px] w-[68px] bg-[#ececea]" />
      </div>
    </div>
  )
}
